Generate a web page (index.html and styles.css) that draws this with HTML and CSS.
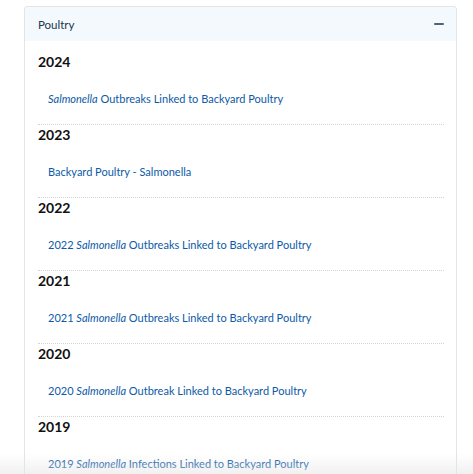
FILE: index.html
```html
<!DOCTYPE html>
<html lang="en">
<head>
<meta charset="utf-8">
<title>Poultry</title>
<link rel="stylesheet" href="styles.css">
</head>
<body>
<div class="card">
  <div class="card-header">
    <span class="card-title">Poultry</span>
    <span class="toggle" aria-hidden="true"></span>
  </div>
  <div class="card-body">
    <section class="year">
      <h3>2024</h3>
      <ul><li><a href="#"><em>Salmonella</em> Outbreaks Linked to Backyard Poultry</a></li></ul>
    </section>
    <section class="year">
      <h3>2023</h3>
      <ul><li><a href="#">Backyard Poultry - Salmonella</a></li></ul>
    </section>
    <section class="year">
      <h3>2022</h3>
      <ul><li><a href="#">2022 <em>Salmonella</em> Outbreaks Linked to Backyard Poultry</a></li></ul>
    </section>
    <section class="year">
      <h3>2021</h3>
      <ul><li><a href="#">2021 <em>Salmonella</em> Outbreaks Linked to Backyard Poultry</a></li></ul>
    </section>
    <section class="year">
      <h3>2020</h3>
      <ul><li><a href="#">2020 <em>Salmonella</em> Outbreak Linked to Backyard Poultry</a></li></ul>
    </section>
    <section class="year">
      <h3>2019</h3>
      <ul><li><a href="#">2019 <em>Salmonella</em> Infections Linked to Backyard Poultry</a></li></ul>
    </section>
  </div>
</div>
<div class="fade"></div>
</body>
</html>
```
FILE: styles.css
```css
html, body {
  margin: 0;
  padding: 0;
  background: #ffffff;
  font-family: "Lato", "Open Sans", sans-serif;
}
.card {
  margin: 6px 16px 0 24px;
  border: 1px solid #e1e4e8;
  border-bottom: 0;
  border-radius: 4px 4px 0 0;
  overflow: hidden;
}
.card-header {
  height: 34px;
  background: #f4f9fe;
  display: flex;
  align-items: center;
  justify-content: space-between;
  padding: 0 12px 0 13px;
}
.card-title {
  font-size: 11.5px;
  color: #22364d;
}
.toggle {
  width: 10px;
  height: 2px;
  background: #4e6178;
  border-radius: 1px;
}
.card-body {
  padding: 11px 12px 0 13px;
}
.year + .year {
  border-top: 1px dotted #d4d4d4;
}
.year h3 {
  margin: 0;
  font-size: 14px;
  line-height: 20px;
  font-weight: 700;
  color: #111111;
}
.year ul {
  list-style: none;
  margin: 18px 0 0;
  padding: 0 0 16px 10px;
}
.year li {
  font-size: 11px;
  line-height: 18px;
}
.year a {
  color: #0c5aa6;
  text-decoration: none;
}
.year em {
  font-style: italic;
}
.fade {
  position: fixed;
  left: 0;
  right: 0;
  bottom: 0;
  height: 20px;
  background: linear-gradient(to bottom, rgba(230, 230, 230, 0), rgba(230, 230, 230, 0.55));
  pointer-events: none;
}
```
